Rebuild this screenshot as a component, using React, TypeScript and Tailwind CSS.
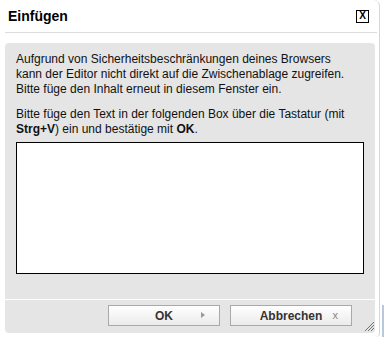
export default function App() {
  return (
    <div className="w-[384px] h-[337px] bg-white flex overflow-hidden font-['Liberation_Sans',Arial,sans-serif] text-black">
      {/* Dialog */}
      <div className="w-[380px] h-[337px] shrink-0 border-r border-[#d6d6d6] rounded-tr-[6px] rounded-br-[4px] flex flex-col">
        {/* Titel */}
        <div className="ml-[5px] mr-[2px] h-[33px] shrink-0 flex items-center justify-between pl-[3px] pr-[8px] border-b border-[#dcdcdc]">
          <span className="text-[14px] font-bold leading-none">Einfügen</span>
          <span className="w-[13px] h-[13px] border border-black flex items-center justify-center text-[10px] font-bold leading-none">
            X
          </span>
        </div>

        {/* Inhalt */}
        <div className="relative ml-[5px] mr-[4px] mt-[10px] h-[290px] bg-[#e5e5e5] rounded-[4px] flex flex-col">
          <div className="pl-[11px] pt-[9px] text-[12px] leading-[15px] text-[#111]">
            <div className="pr-[26px]">
              <p className="mb-[10px]">
                Aufgrund von Sicherheitsbeschränkungen deines Browsers kann der Editor nicht direkt auf die Zwischenablage zugreifen. Bitte füge den Inhalt erneut in diesem Fenster ein.
              </p>
              <p>
                Bitte füge den Text in der folgenden Box über die Tastatur (mit <b>Strg+V</b>) ein und bestätige mit <b>OK</b>.
              </p>
            </div>
            <div className="mt-[5px] w-[348px] h-[132px] bg-white border border-black" />
          </div>

          <div className="mt-auto h-[34px] border-t border-white flex justify-end gap-[10px] pt-[5px] pr-[23px]">
            <button className="relative w-[112px] h-[21px] border border-[#a9a9a9] bg-gradient-to-b from-white to-[#ebebeb] text-[12px] font-bold text-[#333] leading-none">
              OK
              <span className="absolute right-[14px] top-[6px] w-0 h-0 border-y-[3px] border-y-transparent border-l-[4px] border-l-[#999]" />
            </button>
            <button className="relative w-[122px] h-[21px] border border-[#a9a9a9] bg-gradient-to-b from-white to-[#ebebeb] text-[12px] font-bold text-[#333] leading-none">
              Abbrechen
              <span className="absolute right-[13px] top-[4px] text-[11px] font-normal text-[#888]">x</span>
            </button>
          </div>

          {/* Griff */}
          <svg className="absolute right-0 bottom-[1px]" width="12" height="12" viewBox="0 0 12 12">
            <path d="M11 2 L2 11 M11 5 L5 11 M11 8 L8 11" stroke="#6f6f6f" strokeWidth="1" />
          </svg>
        </div>
      </div>

      {/* Rand */}
      <div className="flex-1 flex flex-col">
        <div className="flex-1" />
        <div className="h-[32px] ml-[2px] bg-[#b8c8de]" />
      </div>
    </div>
  );
}
